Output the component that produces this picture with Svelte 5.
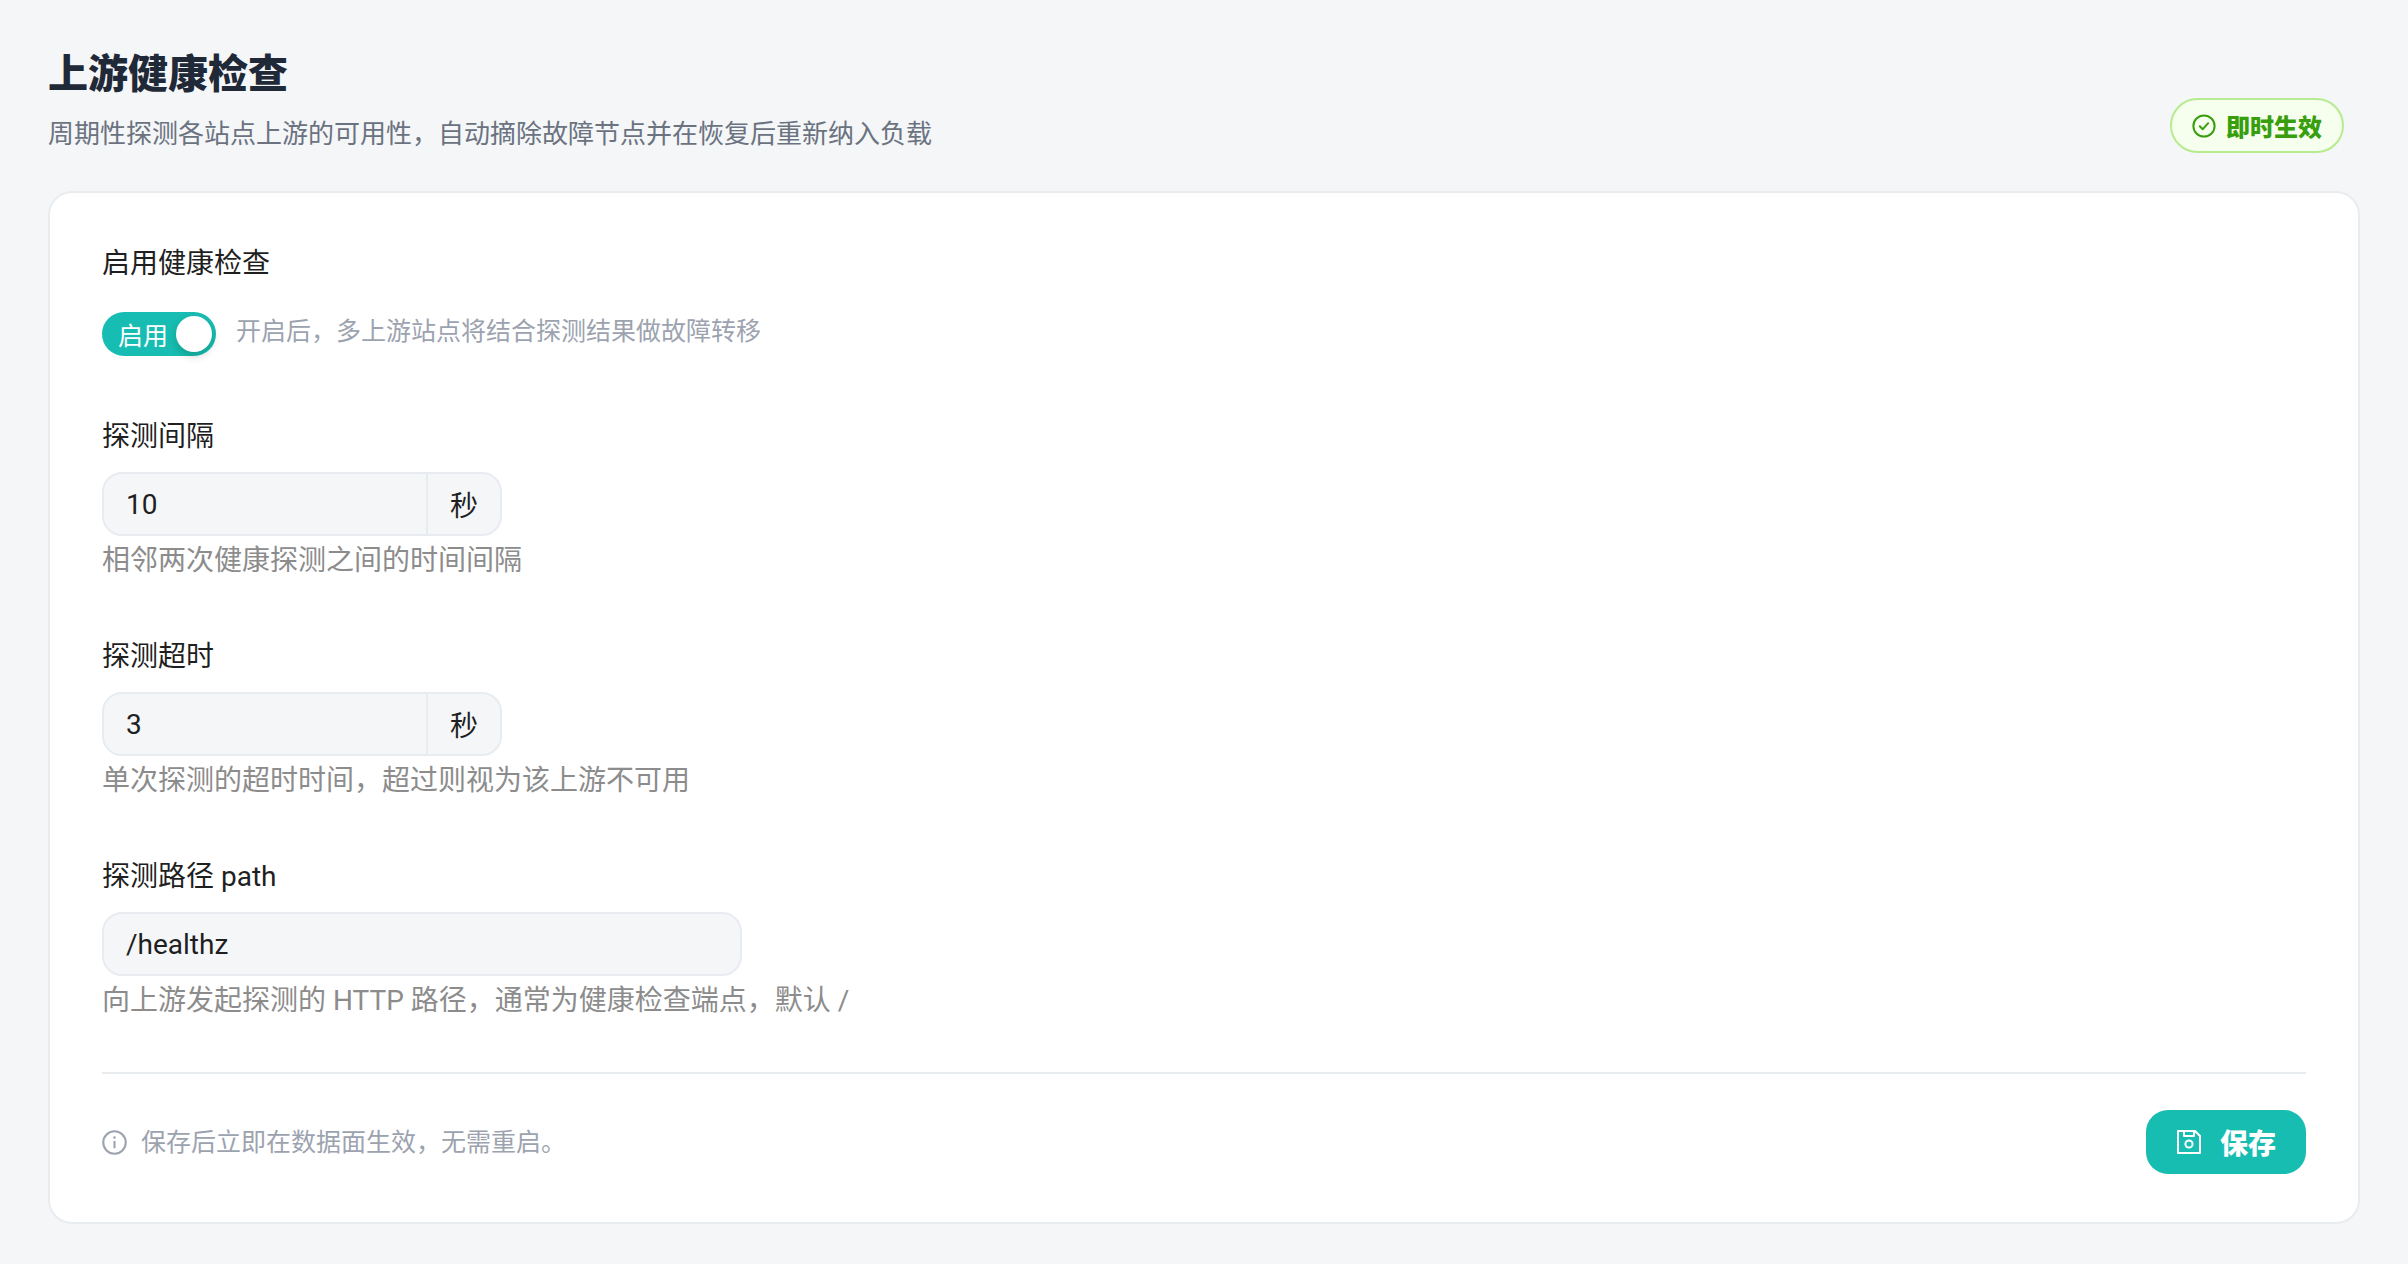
<script>
  let enabled = true;
  let interval = '10';
  let timeout = '3';
  let path = '/healthz';
</script>

<main class="page">
  <header class="head">
    <div>
      <h1>上游健康检查</h1>
      <p class="sub">周期性探测各站点上游的可用性，自动摘除故障节点并在恢复后重新纳入负载</p>
    </div>
    <span class="tag">
      <svg viewBox="0 0 24 24" width="24" height="24" fill="none" stroke="currentColor" stroke-width="2">
        <circle cx="12" cy="12" r="10.6" />
        <path d="M7.8 12.2l3 3 5.4-6" stroke-linecap="round" stroke-linejoin="round" />
      </svg>
      即时生效
    </span>
  </header>

  <section class="card">
    <div class="item first">
      <div class="label">启用健康检查</div>
      <div class="switch-row">
        <button class="switch" class:on={enabled} on:click={() => (enabled = !enabled)}>
          <span class="switch-text">启用</span>
          <span class="knob"></span>
        </button>
        <span class="switch-hint">开启后，多上游站点将结合探测结果做故障转移</span>
      </div>
    </div>

    <div class="item">
      <div class="label">探测间隔</div>
      <div class="input-group">
        <input bind:value={interval} />
        <span class="unit">秒</span>
      </div>
      <div class="help">相邻两次健康探测之间的时间间隔</div>
    </div>

    <div class="item">
      <div class="label">探测超时</div>
      <div class="input-group">
        <input bind:value={timeout} />
        <span class="unit">秒</span>
      </div>
      <div class="help">单次探测的超时时间，超过则视为该上游不可用</div>
    </div>

    <div class="item last">
      <div class="label">探测路径 path</div>
      <div class="input-group wide">
        <input bind:value={path} />
      </div>
      <div class="help">向上游发起探测的 HTTP 路径，通常为健康检查端点，默认 /</div>
    </div>

    <footer class="foot">
      <div class="note">
        <svg viewBox="0 0 24 24" width="25" height="25" fill="none" stroke="currentColor" stroke-width="2">
          <circle cx="12" cy="12" r="10.8" />
          <path d="M12 10.5v7" />
          <circle cx="12" cy="7.2" r="0.7" fill="currentColor" stroke-width="1" />
        </svg>
        <span class="note-text">保存后立即在数据面生效，无需重启。</span>
      </div>
      <button class="save">
        <svg viewBox="0 0 26 26" width="26" height="26" fill="none" stroke="currentColor" stroke-width="2" stroke-linejoin="round">
          <path d="M2 2h17l5 5v17H2z" />
          <path d="M8 2v5h10V2" />
          <circle cx="13" cy="15" r="3.6" />
        </svg>
        保存
      </button>
    </footer>
  </section>
</main>

<style>
  :global(body) {
    background: #f4f6f8;
  }

  .page {
    box-sizing: border-box;
    height: 1264px;
    padding: 48px 48px 0;
    font-family: Roboto, "Noto Sans CJK SC", sans-serif;
    color: #1f1f1f;
  }

  .head {
    display: flex;
    justify-content: space-between;
    align-items: flex-end;
    padding-right: 16px;
    height: 143px;
    box-sizing: border-box;
    padding-bottom: 34px;
  }

  h1 {
    margin: 0;
    font-size: 40px;
    line-height: 52px;
    font-weight: 900;
    color: #1f2937;
  }

  .sub {
    margin: 10px 0 0;
    font-size: 26px;
    line-height: 46px;
    color: #6b7280;
  }

  .tag {
    display: flex;
    align-items: center;
    gap: 10px;
    box-sizing: border-box;
    height: 55px;
    margin-bottom: 4px;
    padding: 0 20px;
    border: 2px solid #b7eb8f;
    border-radius: 28px;
    background: #f6ffed;
    color: #389e0d;
    font-size: 24px;
    font-weight: 900;
  }

  .card {
    box-sizing: border-box;
    height: 1033px;
    padding: 47px 52px 47px;
    background: #fff;
    border: 2px solid #e9ecef;
    border-radius: 24px;
  }

  .item {
    margin-bottom: 50px;
  }

  .item.first {
    margin-bottom: 57px;
  }

  .item.last {
    margin-bottom: 49px;
  }

  .label {
    padding-top: 2px;
    font-size: 28px;
    line-height: 44px;
    margin-bottom: 13px;
  }

  .first .label {
    margin-bottom: 26px;
  }

  .switch-row {
    display: flex;
    align-items: center;
    gap: 20px;
  }

  .switch {
    display: flex;
    align-items: center;
    justify-content: space-between;
    box-sizing: border-box;
    width: 114px;
    height: 44px;
    padding: 0 4px 0 16px;
    border: 0;
    border-radius: 22px;
    background: #17bdb2;
    color: #fff;
    font: inherit;
    font-size: 25px;
  }

  .knob {
    width: 36px;
    height: 36px;
    border-radius: 50%;
    background: #fff;
    box-shadow: 0 4px 8px rgba(0, 35, 11, 0.2);
  }

  .switch-hint {
    position: relative;
    top: -5px;
    font-size: 25px;
    color: #9ca3af;
  }

  .input-group {
    display: flex;
    box-sizing: border-box;
    width: 400px;
    height: 64px;
    border: 2px solid #e8ecf0;
    border-radius: 20px;
    background: #f5f6f8;
  }

  .input-group.wide {
    width: 640px;
  }

  input {
    flex: 1;
    min-width: 0;
    padding: 0 22px;
    border: 0;
    outline: 0;
    background: transparent;
    font: inherit;
    font-size: 28px;
    color: #1f1f1f;
  }

  .unit {
    display: flex;
    align-items: center;
    justify-content: center;
    width: 72px;
    border-left: 2px solid #e8ecf0;
    font-size: 28px;
  }

  .help {
    padding-top: 2px;
    font-size: 28px;
    line-height: 44px;
    margin-top: 1px;
    color: #8c8c8c;
  }

  .foot {
    display: flex;
    justify-content: space-between;
    align-items: center;
    padding-top: 36px;
    border-top: 2px solid #e9ecef;
  }

  .note {
    display: flex;
    align-items: center;
    gap: 14px;
    font-size: 25px;
    color: #9ca3af;
  }

  .note-text {
    margin-bottom: 5px;
  }

  .save {
    display: flex;
    align-items: center;
    justify-content: center;
    gap: 18px;
    width: 160px;
    height: 64px;
    border: 0;
    border-radius: 22px;
    background: #18bdb2;
    color: #fff;
    font: inherit;
    font-size: 28px;
    font-weight: 900;
  }
</style>
